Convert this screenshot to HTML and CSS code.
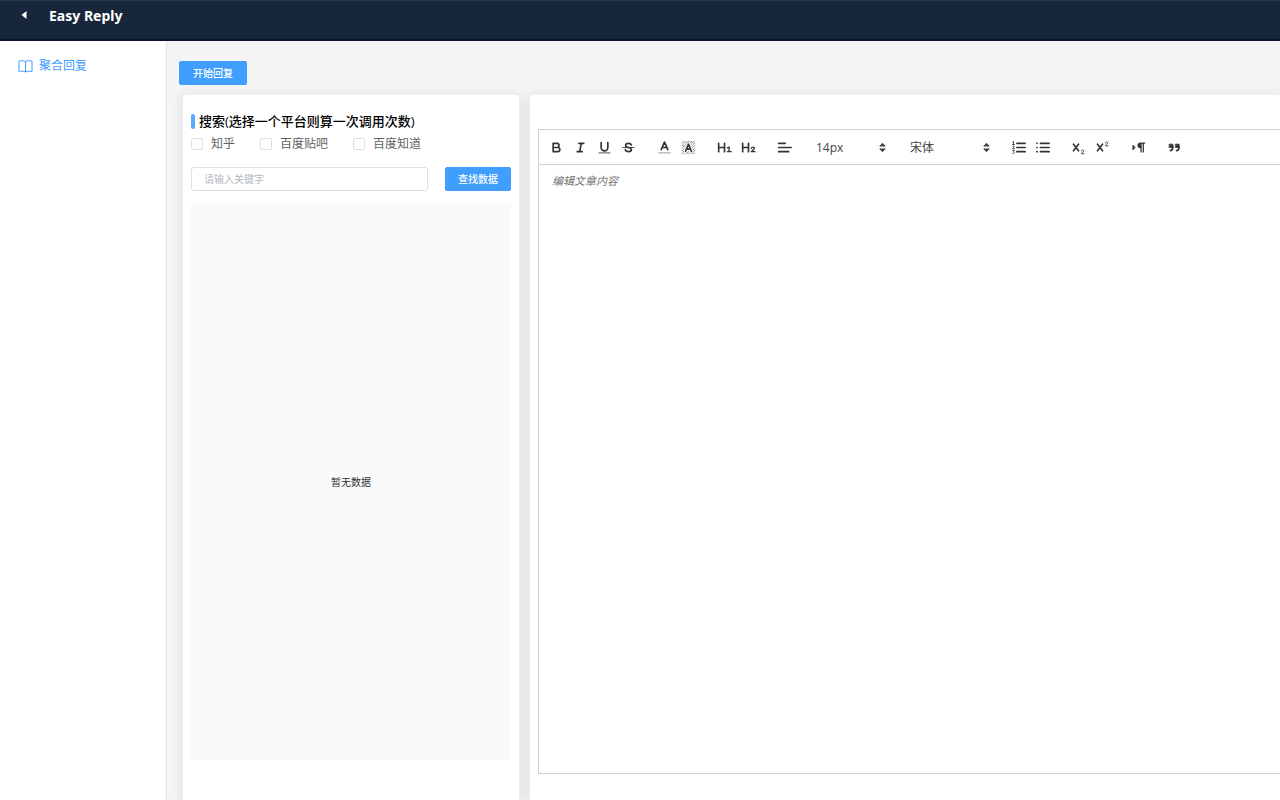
FILE: index.html
```html
<!DOCTYPE html>
<html lang="zh-CN">
<head>
<meta charset="utf-8">
<title>Easy Reply</title>
<link rel="stylesheet" href="styles.css">
</head>
<body>
<header class="topbar">
  <button class="back" type="button" aria-label="返回"><svg width="6" height="8" viewBox="0 0 6 8"><path d="M5.500 0v8L.5 4z" fill="#fff"/></svg></button>
  <h1 class="brand">Easy Reply</h1>
</header>
<div class="shell">
  <nav class="sidebar">
    <a class="nav-link" href="#reply">
      <svg width="15" height="13" viewBox="0 0 15 13" fill="none" stroke="currentColor"><path d="M7.500 1.500C5.500.5 3 .5 1 1v10.500c2-.5 4.500-.5 6.500.5 2-1 4.500-1 6.500-.5V1c-2-.5-4.500-.5-6.500.5zV12"/></svg>
      <span>聚合回复</span>
    </a>
  </nav>
  <main class="main">
    <button class="btn" type="button">开始回复</button>
    <div class="panels">
      <section class="card search-card">
        <h2 class="card-title">搜索(选择一个平台则算一次调用次数)</h2>
        <div class="platforms">
          <label class="check"><input type="checkbox"><span>知乎</span></label>
          <label class="check"><input type="checkbox"><span>百度贴吧</span></label>
          <label class="check"><input type="checkbox"><span>百度知道</span></label>
        </div>
        <form class="search-row">
          <input class="keyword" type="text" placeholder="请输入关键字" aria-label="关键字">
          <button class="btn" type="button">查找数据</button>
        </form>
        <div class="empty">暂无数据</div>
      </section>
      <section class="card editor-card">
        <div class="toolbar">
          <div class="group">
            <button type="button" class="tool" aria-label="加粗"><svg viewBox="0 0 18 18"><path d="M5 4h4.500a2.500 2.500 0 0 1 0 5H5zM5 9h5.500a2.500 2.500 0 0 1 0 5H5z"/></svg></button>
            <button type="button" class="tool" aria-label="斜体"><svg viewBox="0 0 18 18"><path d="M7 4h6M5 14h6M8 14l2-10"/></svg></button>
            <button type="button" class="tool" aria-label="下划线"><svg viewBox="0 0 18 18"><path d="M5 3v6a4 4 0 0 0 8 0V3"/><rect class="fill" x="2" y="15" width="14" height="1"/></svg></button>
            <button type="button" class="tool" aria-label="删除线"><svg viewBox="0 0 18 18"><path class="thin" d="M2 9h14"/><path d="M12.500 6C12 4.400 10.500 4 9 4 7 4 5.500 5 5.500 6.500 5.500 8 7 8.500 9 9s3.500 1 3.500 2.500S11 14 9 14s-3.500-1-3.800-2.500"/></svg></button>
          </div>
          <div class="group">
            <button type="button" class="tool" aria-label="文字颜色"><svg viewBox="0 0 18 18"><path class="thin faded" d="M2 15.500h14"/><path d="M5 11.500L9 2.500l4 9M6.500 9h5"/></svg></button>
            <button type="button" class="tool" aria-label="背景颜色"><svg viewBox="0 0 18 18"><path class="hatch" d="M1 4l3-3M1 7l6-6M1 10l9-9M1 13L13 1M1 16L16 1M3 17L17 3M6 17L17 6M9 17l8-8M12 17l5-5M15 17l2-2"/><path class="halo" d="M5.500 13.500L9 5l3.500 8.500M6.500 11h5"/><path d="M5.500 13.500L9 5l3.500 8.500M6.500 11h5"/></svg></button>
          </div>
          <div class="group">
            <button type="button" class="tool" aria-label="标题 1"><svg viewBox="0 0 18 18"><path d="M2 4v10M9 4v10M2 9h7"/><path class="mid" d="M12.500 9.500l2-1V14M12.500 14H17"/></svg></button>
            <button type="button" class="tool" aria-label="标题 2"><svg viewBox="0 0 18 18"><path d="M2 4v10M9 4v10M2 9h7"/><path class="mid" d="M12.500 10c.2-2 3.700-2 3.700 0 0 1.300-2.500 2.300-3.700 4h4.200"/></svg></button>
          </div>
          <div class="group">
            <button type="button" class="tool" aria-label="对齐方式"><svg viewBox="0 0 18 18"><path d="M2 9h15M2 14h12M2 4h8"/></svg></button>
          </div>
          <div class="group picker picker-size">
            <select aria-label="字号"><option>14px</option><option>16px</option></select>
            <svg viewBox="0 0 18 18"><path class="solid" d="M6 7l3-3 3 3zM6 11l3 3 3-3z"/></svg>
          </div>
          <div class="group picker picker-font">
            <select aria-label="字体"><option>宋体</option><option>黑体</option></select>
            <svg viewBox="0 0 18 18"><path class="solid" d="M6 7l3-3 3 3zM6 11l3 3 3-3z"/></svg>
          </div>
          <div class="group">
            <button type="button" class="tool" aria-label="有序列表"><svg viewBox="0 0 18 18"><path d="M7 4h10M7 9h10M7 14h10"/><path class="thin" d="M2 2.500l1-.8v3.600M1.800 5.500h2.500M2 7.800c.6-1 2.200-.6 1.800.5L2 10.500h2.300M2 12.500h2l-1 1.300c1.500 0 1.500 2.200-.2 2.200H2"/></svg></button>
            <button type="button" class="tool" aria-label="无序列表"><svg viewBox="0 0 18 18"><path d="M6.500 4H17M6.500 9H17M6.500 14H17M2.200 4h.3M2.200 9h.3M2.200 14h.3"/></svg></button>
          </div>
          <div class="group">
            <button type="button" class="tool" aria-label="下标"><svg viewBox="0 0 18 18"><path d="M3 5l6 8M9 5l-6 8"/><path class="thin" d="M12.500 13c.2-1.700 3-1.500 2.800.2-.2 1.200-2 1.900-2.800 3.300h3.200"/></svg></button>
            <button type="button" class="tool" aria-label="上标"><svg viewBox="0 0 18 18"><path d="M3 5l6 8M9 5l-6 8"/><path class="thin" d="M12.500 3.500c.2-1.700 3-1.500 2.800.2C15.100 4.900 13.300 5.600 12.500 7h3.200"/></svg></button>
          </div>
          <div class="group">
            <button type="button" class="tool" aria-label="文字方向"><svg viewBox="0 0 18 18"><path class="solid" d="M2.500 6.500L5 9l-2.500 2.500z"/><path class="fill" d="M17 3v1.500h-1.500V15H14V4.500h-1.200V15h-1.500v-5C6.500 10 6.500 3 11.300 3z"/></svg></button>
          </div>
          <div class="group">
            <button type="button" class="tool" aria-label="引用"><svg viewBox="0 0 18 18"><path class="solid" d="M3 5h4v4H3zM10.500 5h4v4h-4z"/><path d="M7 8c0 3-1 4.500-3 4.700M14.500 8c0 3-1 4.500-3 4.700"/></svg></button>
          </div>
        </div>
        <textarea class="editor" placeholder="编辑文章内容" aria-label="文章内容"></textarea>
      </section>
    </div>
  </main>
</div>
</body>
</html>
```
FILE: styles.css
```css
* {
  box-sizing: border-box;
}

body {
  margin: 0;
  height: 100vh;
  display: flex;
  flex-direction: column;
  overflow: hidden;
  font-family: "Open Sans", "Noto Sans CJK SC", sans-serif;
  font-size: 12px;
  color: #606266;
}

button,
input,
select,
textarea {
  font: inherit;
  margin: 0;
}

.topbar {
  display: flex;
  align-items: flex-start;
  gap: 17px;
  height: 41px;
  padding: 5px 15px;
  background: #18263c;
  border-top: 1px solid #26364d;
  border-bottom: 2px solid #0b1529;
  flex: none;
}

.back {
  display: flex;
  align-items: center;
  justify-content: center;
  width: 17px;
  height: 18px;
  padding: 0;
  border: 0;
  background: none;
}

.brand {
  margin: 0;
  font-family: "Noto Sans", sans-serif;
  font-size: 14px;
  line-height: 20px;
  font-weight: 700;
  color: #fff;
}

.shell {
  flex: 1;
  min-height: 0;
  display: flex;
}

.sidebar {
  width: 167px;
  flex: none;
  padding: 15px 18px;
  background: #fff;
  border-right: 1px solid #e4e5e8;
}

.nav-link {
  display: flex;
  align-items: center;
  gap: 6px;
  line-height: 20px;
  color: #409eff;
  text-decoration: none;
}

.main {
  flex: 1;
  min-width: 0;
  display: flex;
  flex-direction: column;
  align-items: flex-start;
  padding: 20px 0 0 12px;
  background: #f4f4f4;
}

.btn {
  flex: none;
  height: 24px;
  padding: 0 12px;
  border: 1px solid #409eff;
  border-radius: 2px;
  background: #409eff;
  color: #fff;
  font-size: 10px;
  font-weight: 500;
  line-height: 20px;
}

.main > .btn {
  padding: 0 13px;
}

.panels {
  align-self: stretch;
  flex: 1;
  min-height: 0;
  display: flex;
  gap: 9px;
  padding: 9px 0 0 3px;
}

.card {
  display: flex;
  flex-direction: column;
  background: #fff;
  border: 1px solid #ebeef5;
  border-bottom: 0;
  border-radius: 4px 4px 0 0;
  box-shadow: 0 2px 12px rgba(0, 0, 0, 0.1);
}

.search-card {
  width: 338px;
  flex: none;
  padding: 18px 8px 40px;
}

.card-title {
  display: flex;
  align-items: center;
  gap: 4px;
  margin: 0;
  font-size: 13px;
  line-height: 16px;
  font-weight: 500;
  color: #000;
}

.card-title::before {
  content: "";
  width: 4px;
  height: 15px;
  border-radius: 2px;
  background: #58a9ff;
}

.platforms {
  display: flex;
  gap: 25px;
  margin-top: 5px;
}

.check {
  display: flex;
  align-items: center;
  gap: 8px;
  line-height: 20px;
}

.check input {
  appearance: none;
  width: 12px;
  height: 12px;
  border: 1px solid #dcdfe6;
  border-radius: 2px;
  background: #fff;
}

.search-row {
  display: flex;
  gap: 17px;
  margin: 13px 0 12px;
}

.keyword {
  flex: 1;
  min-width: 0;
  height: 24px;
  padding: 0 12px;
  border: 1px solid #dcdfe6;
  border-radius: 3px;
  font-size: 10px;
  background: #fff;
}

.keyword::placeholder {
  color: #b4b8c0;
}

.empty {
  flex: 1;
  display: flex;
  align-items: center;
  justify-content: center;
  background: #fafafa;
  font-size: 10px;
  color: #303133;
}

.editor-card {
  flex: 1;
  min-width: 0;
  padding: 34px 0 26px 8px;
  border-right: 0;
  border-top-right-radius: 0;
}

.toolbar {
  display: flex;
  gap: 12px;
  padding: 6px 5px;
  border: 1px solid #d0d0d0;
  border-right: 0;
}

.group {
  display: flex;
  flex: none;
  align-items: center;
  height: 22px;
}

.tool {
  width: 24px;
  height: 22px;
  padding: 0;
  border: 0;
  background: none;
  display: flex;
  align-items: center;
  justify-content: center;
}

.toolbar svg {
  width: 15px;
  height: 15px;
  fill: none;
  stroke: #333;
  stroke-width: 2;
  stroke-linecap: round;
  stroke-linejoin: round;
}

.toolbar .thin {
  stroke-width: 1;
}

.toolbar .mid {
  stroke-width: 1.6;
}

.toolbar .hatch {
  stroke-width: 1;
  stroke-dasharray: 1.4 0.8;
  stroke-linecap: butt;
}

.toolbar .halo {
  stroke: #fff;
  stroke-width: 4;
}

.toolbar .faded {
  opacity: 0.6;
}

.toolbar .fill {
  fill: #333;
  stroke: none;
}

.toolbar .solid {
  fill: #333;
  stroke-width: 1;
}

.picker {
  display: grid;
}

.picker select,
.picker svg {
  grid-area: 1 / 1;
}

.picker select {
  appearance: none;
  width: 100%;
  height: 22px;
  padding: 0 8px;
  border: 0;
  background: none;
  color: #444;
}

.picker svg {
  justify-self: end;
  pointer-events: none;
}

.picker-size {
  width: 82px;
}

.picker-font {
  width: 92px;
}

.editor {
  flex: 1;
  width: 100%;
  padding: 6px 13px;
  border: 1px solid #d0d0d0;
  border-top: 0;
  border-right: 0;
  resize: none;
  outline: 0;
  font-size: 11px;
  line-height: 20px;
  background: #fff;
}

.editor::placeholder {
  color: #777;
  font-style: italic;
}
```
